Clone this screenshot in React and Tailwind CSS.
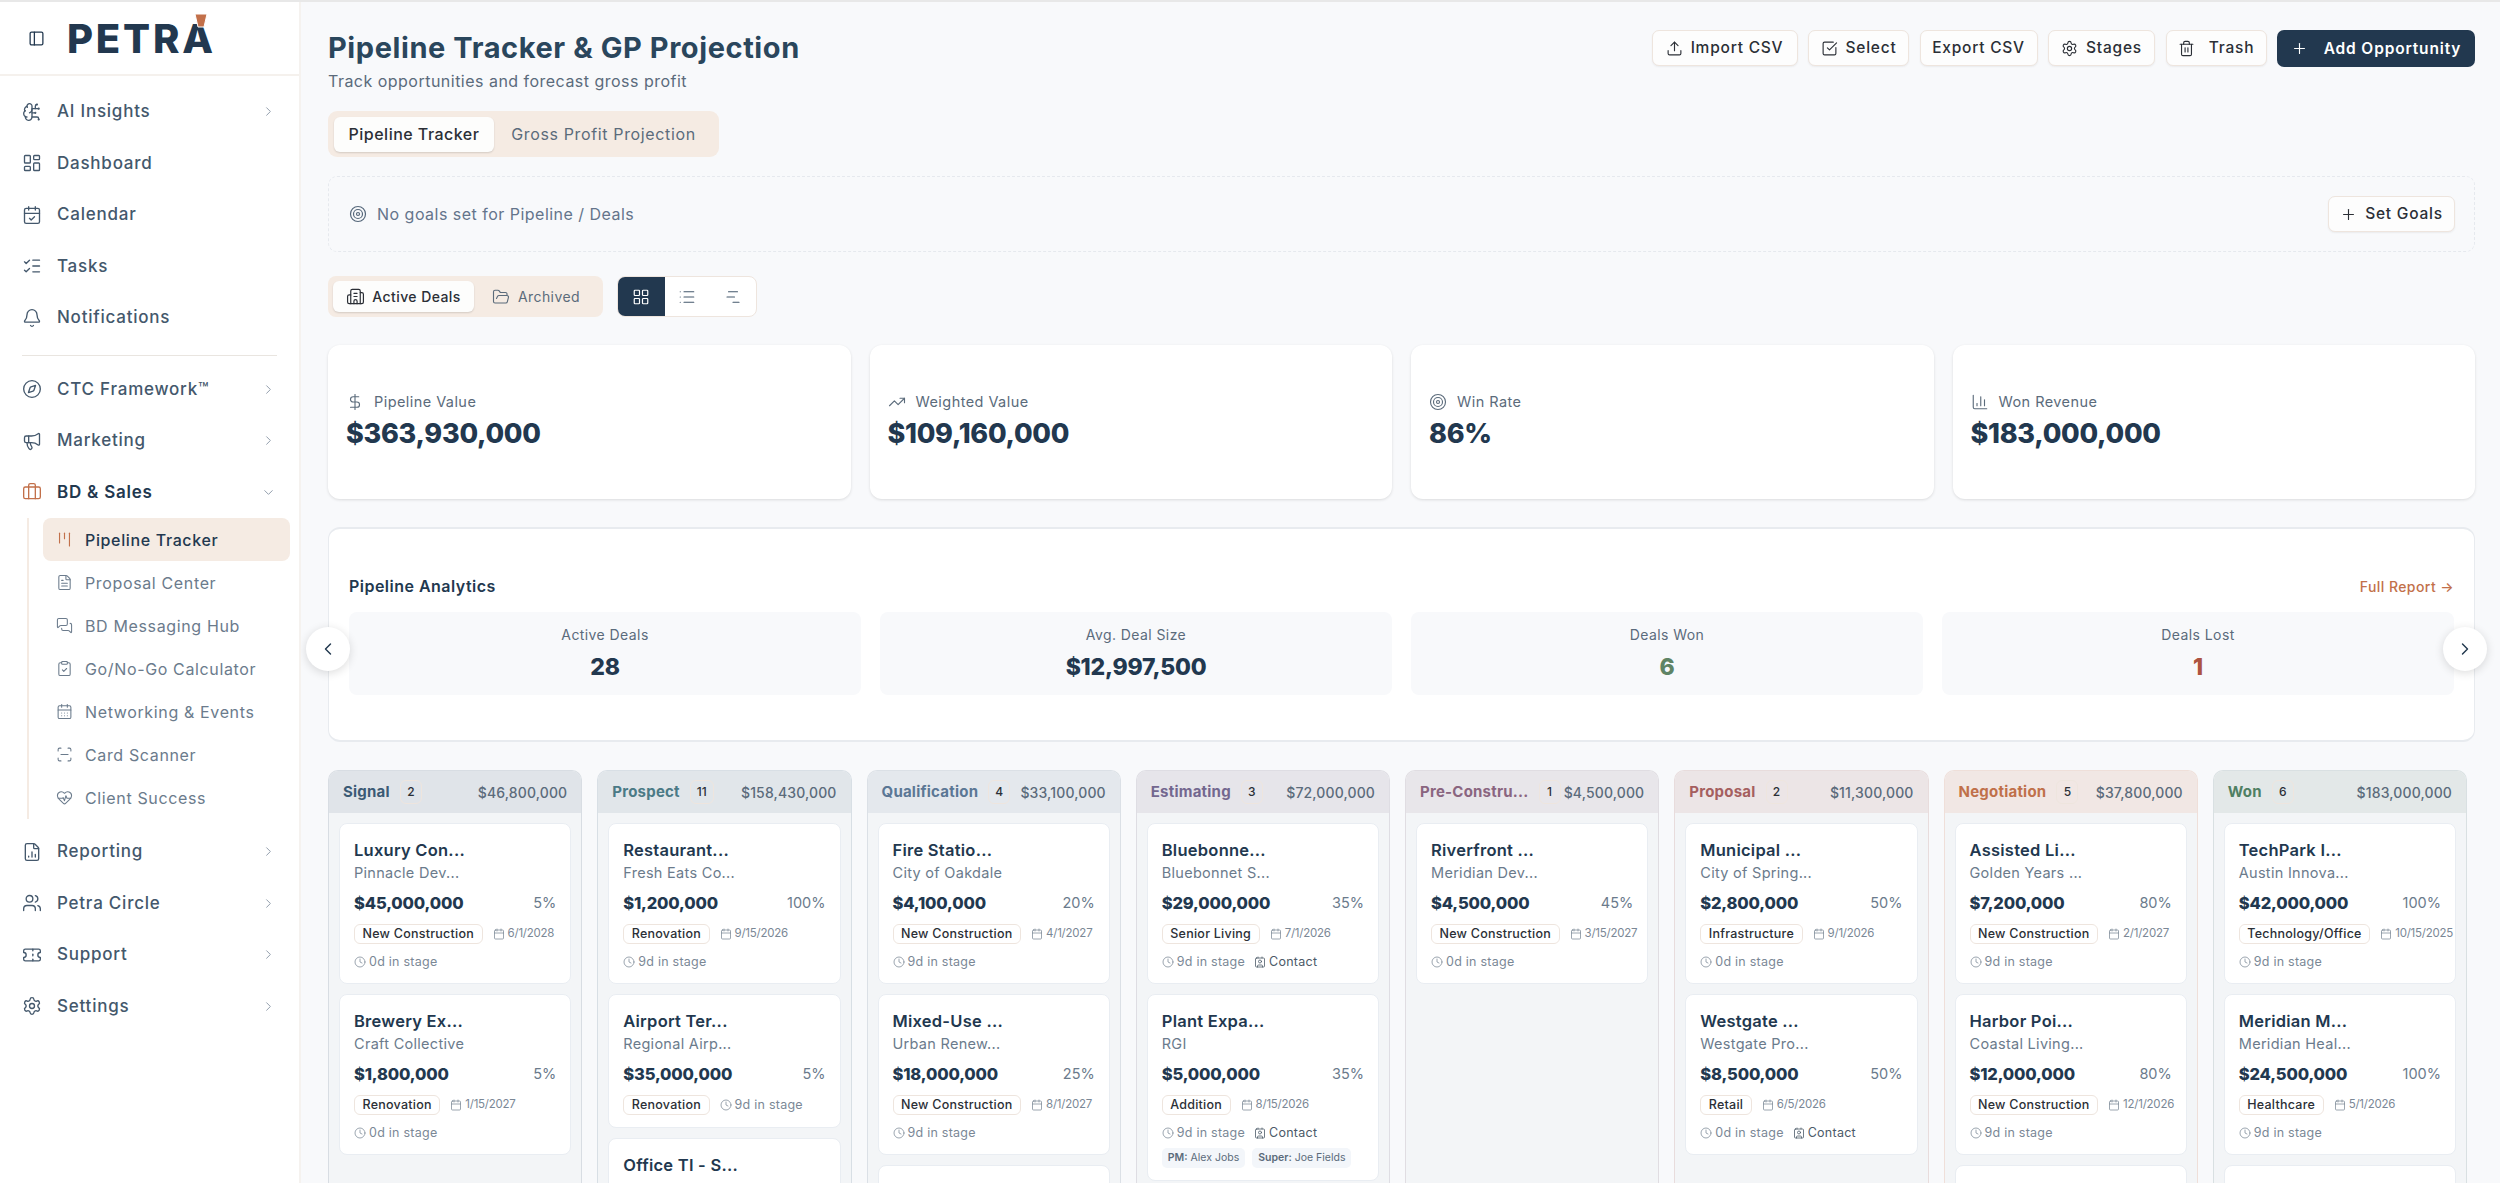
import {
  PanelLeft, BrainCircuit, LayoutDashboard, CalendarCheck, ListChecks, Bell, Compass, Megaphone, Briefcase,
  ChevronRight, ChevronDown, ChevronLeft, Kanban, FileText, MessagesSquare, ClipboardCheck, CalendarDays, ScanLine,
  HeartPulse, FileChartColumn, Users, Ticket, Settings, Upload, SquareCheckBig, Trash2, Plus, Target, Building2,
  FolderOpen, LayoutGrid, List, ChartNoAxesGantt, DollarSign, TrendingUp, ChartColumn, Calendar, Clock, Contact,
} from 'lucide-react';

const navTop = [
  { label: 'AI Insights', icon: BrainCircuit, arrow: true },
  { label: 'Dashboard', icon: LayoutDashboard },
  { label: 'Calendar', icon: CalendarCheck },
  { label: 'Tasks', icon: ListChecks },
  { label: 'Notifications', icon: Bell },
];

const subNav = [
  { label: 'Proposal Center', icon: FileText },
  { label: 'BD Messaging Hub', icon: MessagesSquare },
  { label: 'Go/No-Go Calculator', icon: ClipboardCheck },
  { label: 'Networking & Events', icon: CalendarDays },
  { label: 'Card Scanner', icon: ScanLine },
  { label: 'Client Success', icon: HeartPulse },
];

const navBottom = [
  { label: 'Reporting', icon: FileChartColumn },
  { label: 'Petra Circle', icon: Users },
  { label: 'Support', icon: Ticket },
  { label: 'Settings', icon: Settings },
];

const stats = [
  { label: 'Pipeline Value', value: '$363,930,000', icon: DollarSign },
  { label: 'Weighted Value', value: '$109,160,000', icon: TrendingUp },
  { label: 'Win Rate', value: '86%', icon: Target },
  { label: 'Won Revenue', value: '$183,000,000', icon: ChartColumn },
];

const analytics = [
  { label: 'Active Deals', value: '28', color: 'text-[#22384f]' },
  { label: 'Avg. Deal Size', value: '$12,997,500', color: 'text-[#22384f]' },
  { label: 'Deals Won', value: '6', color: 'text-[#5f8465]' },
  { label: 'Deals Lost', value: '1', color: 'text-[#ad5340]' },
];

// d = date, s = days in stage, c = contact chip
const columns = [
  {
    name: 'Signal', count: 2, total: '$46,800,000', head: 'bg-[#e0e4e9]', text: 'text-[#3b5a75]', edge: 'border-[#d8dde3]',
    cards: [
      { t: 'Luxury Con...', co: 'Pinnacle Dev...', v: '$45,000,000', p: '5%', tag: 'New Construction', d: '6/1/2028', s: '0d' },
      { t: 'Brewery Ex...', co: 'Craft Collective', v: '$1,800,000', p: '5%', tag: 'Renovation', d: '1/15/2027', s: '0d' },
    ],
  },
  {
    name: 'Prospect', count: 11, total: '$158,430,000', head: 'bg-[#e1e6ea]', text: 'text-[#4b7a86]', edge: 'border-[#d8dfe5]',
    cards: [
      { t: 'Restaurant...', co: 'Fresh Eats Co...', v: '$1,200,000', p: '100%', tag: 'Renovation', d: '9/15/2026', s: '9d' },
      { t: 'Airport Ter...', co: 'Regional Airp...', v: '$35,000,000', p: '5%', tag: 'Renovation', s: '9d', inline: true },
      { t: 'Office TI - S...', co: '', v: '', p: '', tag: 'Renovation', s: '9d' },
    ],
  },
  {
    name: 'Qualification', count: 4, total: '$33,100,000', head: 'bg-[#e4e8ed]', text: 'text-[#5b7795]', edge: 'border-[#dbe0e6]',
    cards: [
      { t: 'Fire Statio...', co: 'City of Oakdale', v: '$4,100,000', p: '20%', tag: 'New Construction', d: '4/1/2027', s: '9d' },
      { t: 'Mixed-Use ...', co: 'Urban Renew...', v: '$18,000,000', p: '25%', tag: 'New Construction', d: '8/1/2027', s: '9d' },
      { t: '', co: '', v: '', p: '', tag: 'Renovation', s: '9d' },
    ],
  },
  {
    name: 'Estimating', count: 3, total: '$72,000,000', head: 'bg-[#e6e5ea]', text: 'text-[#73678f]', edge: 'border-[#dedde3]',
    cards: [
      { t: 'Bluebonne...', co: 'Bluebonnet S...', v: '$29,000,000', p: '35%', tag: 'Senior Living', d: '7/1/2026', s: '9d', c: true },
      { t: 'Plant Expa...', co: 'RGI', v: '$5,000,000', p: '35%', tag: 'Addition', d: '8/15/2026', s: '9d', c: true, pm: true },
    ],
  },
  {
    name: 'Pre-Constru...', count: 1, total: '$4,500,000', head: 'bg-[#e8e6ea]', text: 'text-[#8a6580]', edge: 'border-[#e0dde2]',
    cards: [
      { t: 'Riverfront ...', co: 'Meridian Dev...', v: '$4,500,000', p: '45%', tag: 'New Construction', d: '3/15/2027', s: '0d' },
    ],
  },
  {
    name: 'Proposal', count: 2, total: '$11,300,000', head: 'bg-[#ece5e6]', text: 'text-[#a55f5f]', edge: 'border-[#e8dcdc]',
    cards: [
      { t: 'Municipal ...', co: 'City of Spring...', v: '$2,800,000', p: '50%', tag: 'Infrastructure', d: '9/1/2026', s: '0d' },
      { t: 'Westgate ...', co: 'Westgate Pro...', v: '$8,500,000', p: '50%', tag: 'Retail', d: '6/5/2026', s: '0d', c: true },
    ],
  },
  {
    name: 'Negotiation', count: 5, total: '$37,800,000', head: 'bg-[#f1e7e4]', text: 'text-[#c0704a]', edge: 'border-[#efdfd9]',
    cards: [
      { t: 'Assisted Li...', co: 'Golden Years ...', v: '$7,200,000', p: '80%', tag: 'New Construction', d: '2/1/2027', s: '9d' },
      { t: 'Harbor Poi...', co: 'Coastal Living...', v: '$12,000,000', p: '80%', tag: 'New Construction', d: '12/1/2026', s: '9d' },
      { t: '', co: '', v: '', p: '', tag: 'Renovation', s: '9d' },
    ],
  },
  {
    name: 'Won', count: 6, total: '$183,000,000', head: 'bg-[#e3e8e8]', text: 'text-[#4f7f63]', edge: 'border-[#d9e0e2]',
    cards: [
      { t: 'TechPark I...', co: 'Austin Innova...', v: '$42,000,000', p: '100%', tag: 'Technology/Office', d: '10/15/2025', s: '9d' },
      { t: 'Meridian M...', co: 'Meridian Heal...', v: '$24,500,000', p: '100%', tag: 'Healthcare', d: '5/1/2026', s: '9d' },
      { t: '', co: '', v: '', p: '', tag: 'Renovation', s: '9d' },
    ],
  },
];

function NavItem({ item }) {
  const Icon = item.icon;
  return (
    <div className="flex h-[51.5px] items-center pl-[22px] pr-[23px] text-[#44586c]">
      <Icon size={20} strokeWidth={1.6} className="shrink-0" />
      <span className="ml-[15px] flex-1 text-[17px] font-medium tracking-[0.045em]">{item.label}</span>
      {item.arrow !== false && <ChevronRight size={15} strokeWidth={1.5} className="text-[#8b98a6]" />}
    </div>
  );
}

function Sidebar() {
  return (
    <aside className="flex w-[301px] shrink-0 flex-col border-r-2 border-[#f5f2ef] bg-white">
      <div className="flex h-[74px] shrink-0 items-center border-b-2 border-[#f5f1ed] pl-[28px]">
        <PanelLeft size={17} strokeWidth={1.8} className="text-[#22384f]" />
        <div className="relative mt-[2px] ml-[22px]">
          <span className="block text-[40px] leading-none font-extrabold tracking-[0.07em] text-[#22384f]">PETRA</span>
          <svg className="absolute top-[-6px] right-[8px]" width="14" height="15" viewBox="0 0 14 15">
            <polygon points="1,1 13,1 10,14 4,14" fill="#c2704a" stroke="#ffffff" strokeWidth="1" />
          </svg>
        </div>
      </div>
      <nav className="flex flex-col pt-[10px]">
        {navTop.map((n) => (
          <NavItem key={n.label} item={{ ...n, arrow: !!n.arrow }} />
        ))}
        <div className="mx-[22px] mt-[11px] mb-[8px] h-[1px] bg-[#e9e5e0]" />
        <NavItem item={{ label: 'CTC Framework™', icon: Compass }} />
        <NavItem item={{ label: 'Marketing', icon: Megaphone }} />
        <div className="flex h-[51.5px] items-center pl-[22px] pr-[23px] text-[#22384f]">
          <Briefcase size={20} strokeWidth={1.6} className="shrink-0 text-[#c2704a]" />
          <span className="ml-[15px] flex-1 text-[17px] font-semibold tracking-[0.045em]">BD &amp; Sales</span>
          <ChevronDown size={15} strokeWidth={1.5} className="text-[#8b98a6]" />
        </div>
        <div className="ml-[27px] mr-[9px] flex flex-col border-l-2 border-[#f5ebe3] pl-[14px]">
          <div className="flex h-[43px] items-center rounded-[8px] bg-[#f5ebe3] pl-[13px] text-[#22384f]">
            <Kanban size={17} strokeWidth={1.6} className="shrink-0 text-[#c2704a]" />
            <span className="ml-[12px] text-[16px] font-medium tracking-[0.04em]">Pipeline Tracker</span>
          </div>
          {subNav.map((s) => {
            const Icon = s.icon;
            return (
              <div key={s.label} className="flex h-[43px] items-center pl-[13px] text-[#6b7b8c]">
                <Icon size={17} strokeWidth={1.5} className="shrink-0" />
                <span className="ml-[12px] text-[16px] tracking-[0.04em] whitespace-nowrap">{s.label}</span>
              </div>
            );
          })}
        </div>
        <div className="mt-[7px] flex flex-col">
          {navBottom.map((n) => (
            <NavItem key={n.label} item={n} />
          ))}
        </div>
      </nav>
    </aside>
  );
}

function OutlineButton({ icon: Icon, children, width, gap = 'gap-[8px]' }) {
  return (
    <button className={`flex h-[36px] ${width} items-center justify-center ${gap} rounded-[7px] border border-[#eee5de] bg-[#fdfdfd] text-[15.5px] font-medium tracking-[0.05em] text-[#2b2f36] shadow-[0_1px_2px_rgba(0,0,0,0.06)]`}>
      {Icon && <Icon size={17} strokeWidth={1.6} />}
      {children}
    </button>
  );
}

function Header() {
  return (
    <div className="flex items-start justify-between">
      <div>
        <h1 className="text-[29px] leading-[36px] font-bold tracking-[0.02em] text-[#2a465c]">Pipeline Tracker &amp; GP Projection</h1>
        <p className="mt-[3px] text-[16px] leading-[24px] tracking-[0.03em] text-[#5b6b7b]">Track opportunities and forecast gross profit</p>
      </div>
      <div className="flex gap-[10.5px]">
        <OutlineButton icon={Upload} width="w-[146px]">Import CSV</OutlineButton>
        <OutlineButton icon={SquareCheckBig} width="w-[101px]">Select</OutlineButton>
        <OutlineButton width="w-[118px]">Export CSV</OutlineButton>
        <OutlineButton icon={Settings} width="w-[107px]">Stages</OutlineButton>
        <OutlineButton icon={Trash2} width="w-[101px]" gap="gap-[14px]">Trash</OutlineButton>
        <button className="flex h-[37px] w-[198px] items-center justify-center gap-[16px] rounded-[7px] bg-[#22384f] text-[15.5px] font-semibold tracking-[0.055em] text-white">
          <Plus size={17} strokeWidth={1.6} />
          Add Opportunity
        </button>
      </div>
    </div>
  );
}

function ViewControls() {
  return (
    <div className="mt-[24px] flex gap-[14px]">
      <div className="flex h-[41px] w-[275px] items-center rounded-[8px] bg-[#f5ebe3] p-[5px] text-[14px] tracking-[0.03em]">
        <div className="flex h-[31px] w-[141px] items-center justify-center gap-[7px] rounded-[6px] bg-[#fdfdfc] font-medium text-[#2b2f36] shadow-[0_1px_2px_rgba(0,0,0,0.14)]">
          <Building2 size={19} strokeWidth={1.5} />
          Active Deals
        </div>
        <div className="flex flex-1 items-center justify-center gap-[8px] text-[#5b6b7b]">
          <FolderOpen size={18} strokeWidth={1.5} />
          Archived
        </div>
      </div>
      <div className="flex h-[41px] w-[140px] items-center overflow-hidden rounded-[8px] border border-[#eee5de] bg-white text-[#44586c]">
        <div className="flex h-full w-[47px] items-center justify-center bg-[#22384f] text-white">
          <LayoutGrid size={18} strokeWidth={1.6} />
        </div>
        <div className="flex h-full w-[46px] items-center justify-center">
          <List size={18} strokeWidth={1.5} />
        </div>
        <div className="flex h-full w-[46px] items-center justify-center">
          <ChartNoAxesGantt size={18} strokeWidth={1.5} />
        </div>
      </div>
    </div>
  );
}

function Analytics() {
  return (
    <div className="relative mt-[28px] flex h-[215px] flex-col rounded-[12px] border-t-2 border-r border-b-2 border-l border-[#e8ebef] bg-white px-[20px]">
      <div className="mt-[45px] flex h-[24px] items-center justify-between">
        <h2 className="text-[16px] font-semibold tracking-[0.03em] text-[#22384f]">Pipeline Analytics</h2>
        <span className="text-[14px] font-medium tracking-[0.03em] text-[#c2704a]">Full Report →</span>
      </div>
      <div className="mt-[14px] grid grid-cols-4 gap-[19px]">
        {analytics.map((a) => (
          <div key={a.label} className="flex h-[83px] flex-col items-center rounded-[8px] bg-[#f8f9fb]">
            <span className="mt-[13px] text-[14px] leading-[20px] tracking-[0.03em] text-[#5b6b7b]">{a.label}</span>
            <span className={`mt-[7px] text-[23px] leading-[30px] font-extrabold tracking-[-0.01em] ${a.color}`}>{a.value}</span>
          </div>
        ))}
      </div>
      <button className="absolute top-[98px] left-[-23px] flex h-[44px] w-[44px] items-center justify-center rounded-full bg-white text-[#22384f] shadow-[0_2px_10px_rgba(0,0,0,0.14)]">
        <ChevronLeft size={20} strokeWidth={1.7} />
      </button>
      <button className="absolute top-[98px] right-[-13px] flex h-[44px] w-[44px] items-center justify-center rounded-full bg-white text-[#22384f] shadow-[0_2px_10px_rgba(0,0,0,0.14)]">
        <ChevronRight size={20} strokeWidth={1.7} />
      </button>
    </div>
  );
}

function DealCard({ card }) {
  const stage = (
    <span className="flex items-center gap-[3px] text-[#7b8896]">
      <Clock size={12} strokeWidth={1.5} />
      {card.s} in stage
    </span>
  );
  return (
    <div className="rounded-[8px] border border-[#e9edf2] bg-white px-[14px] pt-[14px] pb-[12px]">
      <div className="h-[24px] text-[16.5px] leading-[24px] font-semibold tracking-[0.015em] whitespace-nowrap text-[#22384f]">{card.t}</div>
      <div className="h-[22px] text-[14.5px] leading-[22px] tracking-[0.02em] whitespace-nowrap text-[#6b7b8c]">{card.co}</div>
      <div className="mt-[6px] flex h-[26px] items-center justify-between">
        <span className="text-[16.5px] font-extrabold tracking-[-0.01em] text-[#22384f]">{card.v}</span>
        <span className="text-[14.5px] text-[#6b7b8c]">{card.p}</span>
      </div>
      <div className="mt-[8px] flex h-[20px] items-center gap-[10px] text-[12.5px] tracking-[0.02em] whitespace-nowrap">
        <span className="flex h-[20px] items-center rounded-[6px] border border-[#eee5de] px-[7.5px] font-medium text-[#2b2f36]">{card.tag}</span>
        {card.inline ? stage : (
          <span className="flex items-center gap-[3px] text-[11.5px] tracking-[-0.02em] text-[#7b8896]">
            <Calendar size={12} strokeWidth={1.5} />
            {card.d}
          </span>
        )}
      </div>
      {!card.inline && (
        <div className="mt-[9px] flex h-[18px] items-center gap-[9px] text-[12.5px] tracking-[0.02em]">
          {stage}
          {card.c && (
            <span className="flex items-center gap-[3px] text-[#4c5a68]">
              <Contact size={12} strokeWidth={1.6} />
              Contact
            </span>
          )}
        </div>
      )}
      {card.pm && (
        <div className="mt-[6px] flex gap-[7px] text-[10.5px] whitespace-nowrap text-[#5b6b7b]">
          <span className="flex h-[20px] items-center rounded-[5px] bg-[#f3f6fa] px-[6px]"><b className="mr-[3px] font-semibold">PM:</b>Alex Jobs</span>
          <span className="flex h-[20px] items-center rounded-[5px] bg-[#f3f6fa] px-[6px]"><b className="mr-[3px] font-semibold">Super:</b>Joe Fields</span>
        </div>
      )}
    </div>
  );
}

function Board() {
  return (
    <div className="mt-[28px] grid grid-cols-8 gap-[15px] pr-[8px]">
      {columns.map((col) => (
        <div key={col.name} className={`min-h-[420px] overflow-hidden rounded-t-[10px] border-t border-r border-l ${col.edge} bg-[#f3f5f7]`}>
          <div className={`flex h-[42px] items-center px-[14px] ${col.head}`}>
            <span className={`text-[15px] font-bold tracking-[0.015em] whitespace-nowrap ${col.text}`}>{col.name}</span>
            <span className="ml-[10px] flex h-[24px] min-w-[22px] items-center justify-center rounded-[6px] border border-[#eee5de] px-[6px] text-[12px] font-medium text-[#2b2f36]">{col.count}</span>
            <span className="ml-auto text-[14px] font-medium tracking-[0.01em] text-[#5b6b7b]">{col.total}</span>
          </div>
          <div className="flex flex-col gap-[10px] px-[10px] pt-[10px]">
            {col.cards.map((c, i) => <DealCard key={i} card={c} />)}
          </div>
        </div>
      ))}
    </div>
  );
}

export default function App() {
  return (
    <div className="flex h-screen overflow-hidden border-t-2 border-[#e8e8e8] bg-[#f8f9fb] font-['Inter',sans-serif]">
      <Sidebar />
      <main className="min-w-0 flex-1 overflow-hidden pt-[28px] pr-[25px] pl-[27px]">
        <Header />
        <div className="mt-[18px] flex h-[46px] w-[391px] items-center rounded-[9px] bg-[#f5ebe3] p-[6px] text-[16px] tracking-[0.04em]">
          <div className="flex h-[35px] w-[160px] items-center justify-center rounded-[6px] bg-[#fdfdfc] font-medium tracking-[0.03em] text-[#2b2f36] shadow-[0_1px_2px_rgba(0,0,0,0.14)]">Pipeline Tracker</div>
          <div className="flex flex-1 items-center justify-center text-[#5b6b7b]">Gross Profit Projection</div>
        </div>
        <div className="mt-[19px] flex h-[76px] items-center justify-between rounded-[9px] border border-dashed border-[#e6e9ee] pr-[19px] pl-[20px]">
          <div className="flex items-center gap-[10px] text-[16px] tracking-[0.03em] text-[#64748b]">
            <Target size={18} strokeWidth={1.6} className="text-[#55677a]" />
            No goals set for Pipeline / Deals
          </div>
          <OutlineButton icon={Plus} width="w-[127px]">Set Goals</OutlineButton>
        </div>
        <ViewControls />
        <div className="mt-[28px] grid grid-cols-4 gap-[19px]">
          {stats.map((s) => {
            const Icon = s.icon;
            return (
              <div key={s.label} className="flex h-[154px] flex-col justify-center rounded-[12px] bg-white px-[18px] shadow-[0_1px_3px_rgba(0,0,0,0.12)]">
                <div className="flex items-center gap-[10px] text-[14.5px] tracking-[0.03em] text-[#5b6b7b]">
                  <Icon size={18} strokeWidth={1.5} />
                  {s.label}
                </div>
                <div className="mt-[2px] text-[27px] leading-[38px] font-extrabold tracking-[-0.01em] text-[#22384f]">{s.value}</div>
              </div>
            );
          })}
        </div>
        <Analytics />
        <Board />
      </main>
    </div>
  );
}
